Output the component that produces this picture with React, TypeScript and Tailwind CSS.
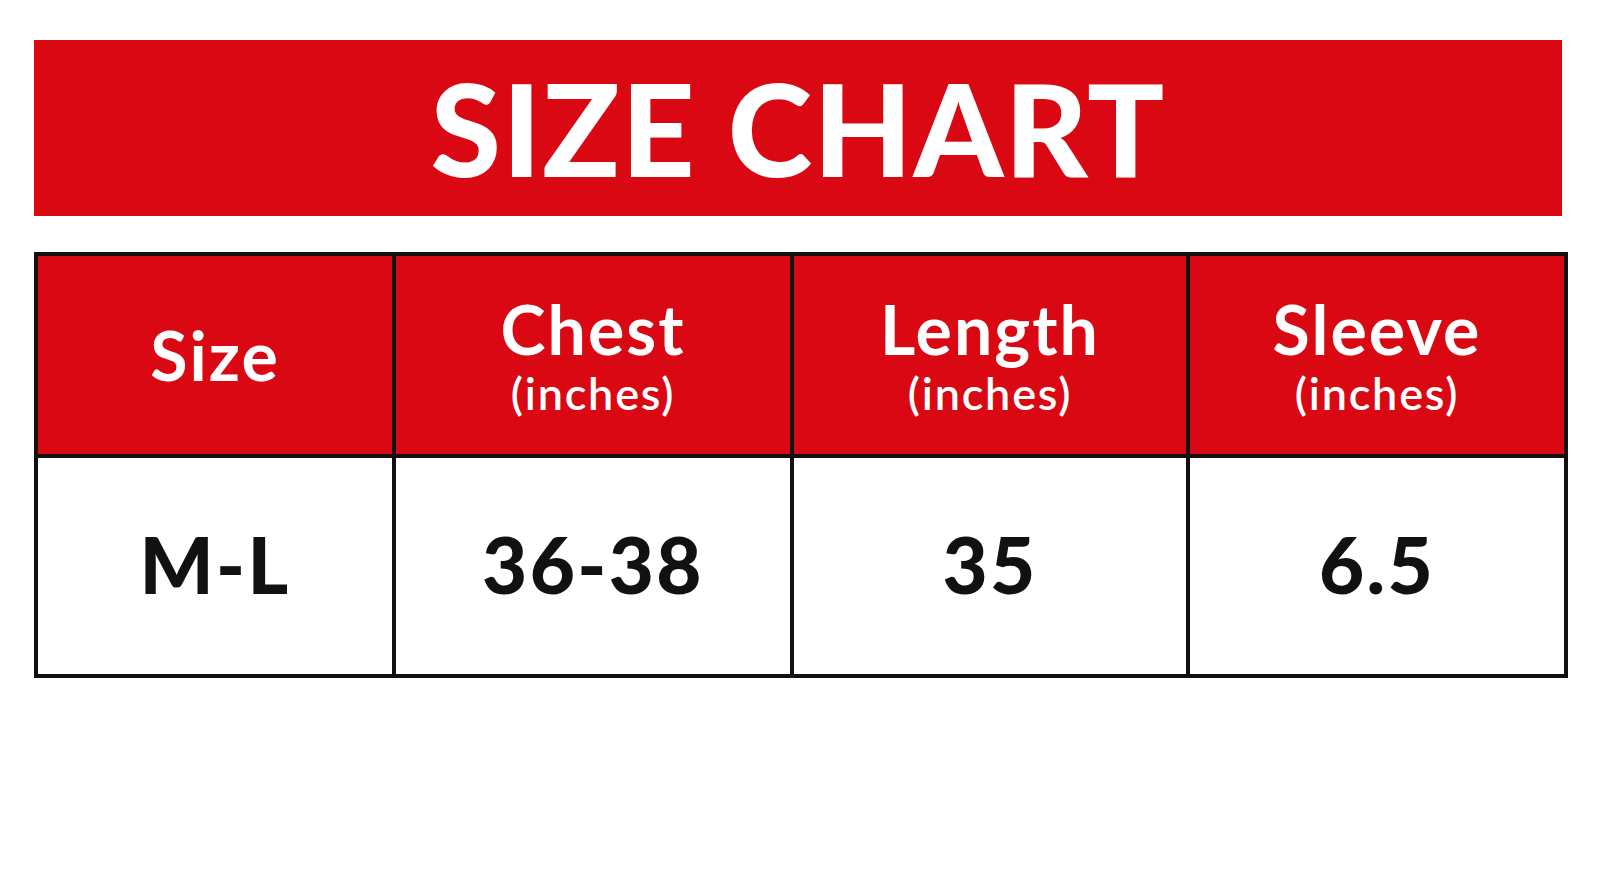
const columns = [
  { title: "Size", unit: null, value: "M-L", width: "w-[358px]" },
  { title: "Chest", unit: "(inches)", value: "36-38", width: "w-[398px]" },
  { title: "Length", unit: "(inches)", value: "35", width: "w-[396px]" },
  { title: "Sleeve", unit: "(inches)", value: "6.5", width: "w-[378px]" },
]

export default function App() {
  return (
    <div className="min-h-[879px] w-[1600px] bg-white pt-[40px] pl-[34px] font-['Lato',sans-serif]">
      {/* Title banner */}
      <div className="flex h-[176px] w-[1528px] items-center justify-center bg-[#da0812]">
        <h1 className="text-[128px] font-black leading-none tracking-[0.01em] text-white">
          SIZE CHART
        </h1>
      </div>

      {/* Table */}
      <table className="mt-[36px] w-[1531px] table-fixed border-collapse border-[4px] border-[#111]">
        <thead>
          <tr className="h-[202px] bg-[#da0812] text-white">
            {columns.map((c) => (
              <th key={c.title} className={`${c.width} border-[4px] border-[#111] text-center align-middle`}>
                <div className="text-[68px] font-bold leading-[1.1] tracking-[0.03em]">{c.title}</div>
                {c.unit && (
                  <div className="mt-[2px] text-[45px] font-semibold leading-[1.1] tracking-[0.04em]">{c.unit}</div>
                )}
              </th>
            ))}
          </tr>
        </thead>
        <tbody>
          <tr className="h-[220px] bg-white text-[#111]">
            {columns.map((c) => (
              <td
                key={c.title}
                className="border-[4px] border-[#111] pb-[4px] text-center align-middle text-[78px] font-black leading-none tracking-[0.03em]"
              >
                {c.value}
              </td>
            ))}
          </tr>
        </tbody>
      </table>
    </div>
  )
}
